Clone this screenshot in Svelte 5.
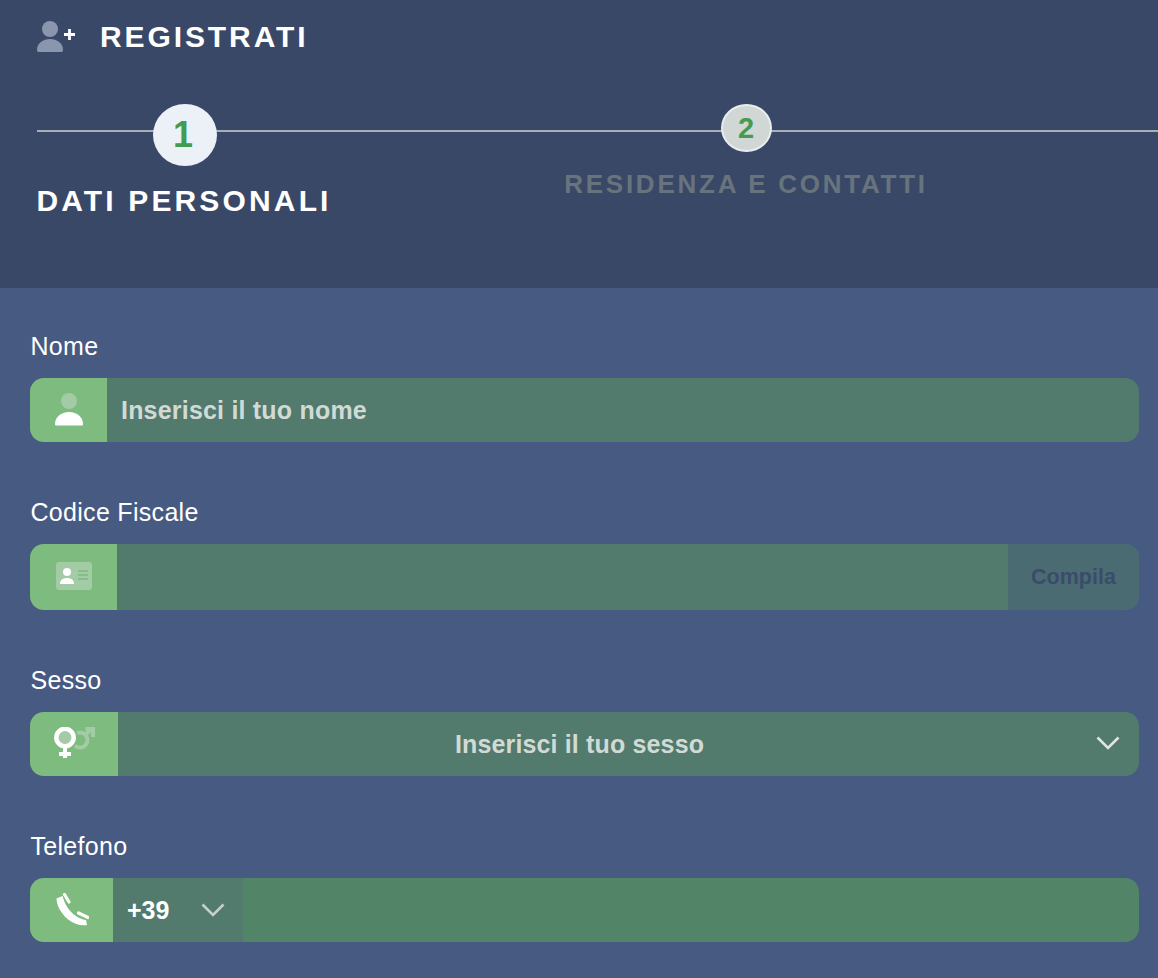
<script>
	let fields = [
		{ label: 'Nome', icon: 'user', placeholder: 'Inserisci il tuo nome' }
	]
</script>

<main>
	<header class="top">
		<div class="title">
			<svg class="title-icon" width="40" height="32" viewBox="0 0 40 32">
				<circle cx="13" cy="8" r="8" fill="#8a96ae" />
				<path d="M0 29 C0 22 6 18 13 18 C20 18 26 22 26 29 C26 30.500 25 31 24 31 H2 C1 31 0 30.500 0 29 Z" fill="#8a96ae" />
				<path d="M27 13.500 H38 M32.500 8 V19" stroke="#fff" stroke-width="2.800" fill="none" />
			</svg>
			<h1>REGISTRATI</h1>
		</div>
		<div class="stepper">
			<div class="line"></div>
			<div class="step active">
				<span class="circle">1</span>
				<span class="name">DATI PERSONALI</span>
			</div>
			<div class="step next">
				<span class="circle">2</span>
				<span class="name">RESIDENZA E CONTATTI</span>
			</div>
		</div>
	</header>

	<section class="form">
		{#each fields as f}
			<label class="lbl" for="nome">{f.label}</label>
			<div class="field first">
				<span class="addon a-nome">
					<svg width="30" height="34" viewBox="0 0 30 34">
						<circle cx="15" cy="8" r="8" fill="#a3cba6" />
						<path d="M1 31 C1 24 7 19 15 19 C23 19 29 24 29 31 C29 32 28.500 32.500 27.500 32.500 H2.500 C1.500 32.500 1 32 1 31 Z" fill="#fff" />
					</svg>
				</span>
				<input id="nome" placeholder={f.placeholder} />
			</div>
		{/each}

		<label class="lbl" for="cf">Codice Fiscale</label>
		<div class="field tall">
			<span class="addon a-cf">
				<svg width="36" height="28" viewBox="0 0 36 28">
					<rect width="36" height="28" rx="3" fill="#a3cba6" />
					<circle cx="11" cy="10" r="4" fill="#fff" />
					<path d="M4 22 C4 18 7 16 11 16 C15 16 18 18 18 22 Z" fill="#fff" />
					<path d="M22 9 H32 M22 13 H32 M22 17 H32" stroke="#7dbb7f" stroke-width="1.500" />
				</svg>
			</span>
			<input id="cf" />
			<button class="fill" type="button">Compila</button>
		</div>

		<label class="lbl" for="sesso">Sesso</label>
		<div class="field">
			<span class="addon a-sex">
				<svg width="42" height="34" viewBox="0 0 42 34">
					<circle cx="27" cy="13" r="7.500" fill="none" stroke="#a3cba6" stroke-width="4" />
					<path d="M32 8 L39 1.500 M32.500 2 H40 V10" fill="none" stroke="#a3cba6" stroke-width="4" />
					<circle cx="12" cy="10.500" r="13" fill="#7dbb7f" />
					<circle cx="12" cy="10.500" r="8.700" fill="#a3cba6" stroke="#fff" stroke-width="4.500" />
					<path d="M12 20 V31 M6 27 H18" stroke="#fff" stroke-width="4" fill="none" />
				</svg>
			</span>
			<div class="select" id="sesso">Inserisci il tuo sesso</div>
			<svg class="chev" width="24" height="14" viewBox="0 0 24 14"><path d="M1.500 1.500 L12 12 L22.500 1.500" fill="none" stroke="#dfe5e1" stroke-width="2.600" /></svg>
		</div>

		<label class="lbl" for="tel">Telefono</label>
		<div class="field tel">
			<span class="addon a-tel">
				<svg width="34" height="34" viewBox="0 0 34 34">
					<path d="M1.500 5.500 L7.500 3 C9.500 10.500 14 18.500 21 23 C24 25 27 26.500 31 27 L32 32 C20 34 8 25 3 13 C2 10 1.500 7.500 1.500 5.500 Z" fill="#fff" />
					<path d="M9.500 1.500 L14 9 M23.500 20 L33 24.500" stroke="#fff" stroke-width="3.200" fill="none" stroke-linecap="round" />
				</svg>
			</span>
			<div class="prefix">
				<span>+39</span>
				<svg width="24" height="14" viewBox="0 0 24 14"><path d="M1.500 1.500 L12 12 L22.500 1.500" fill="none" stroke="#c6d0ca" stroke-width="2.600" /></svg>
			</div>
			<input id="tel" />
		</div>
	</section>
</main>

<style>
	:global(body) {
		margin: 0;
		background: #475a82;
		font-family: "Liberation Sans", Arial, sans-serif;
	}
	main {
		width: 1158px;
		height: 978px;
		overflow: hidden;
		background: #475a82;
	}
	.top {
		height: 288px;
		box-sizing: border-box;
		background: #3a4868;
		padding: 20px 0 0 37px;
		overflow: hidden;
	}
	.title {
		display: flex;
		align-items: center;
		gap: 23px;
		height: 34px;
	}
	.title-icon {
		display: block;
	}
	h1 {
		margin: 0;
		color: #fff;
		font-size: 30px;
		font-weight: 700;
		letter-spacing: 2.900px;
		line-height: 34px;
	}
	.stepper {
		position: relative;
		display: flex;
		margin-top: 45px;
		height: 120px;
	}
	.line {
		position: absolute;
		left: 0;
		right: 0;
		top: 31px;
		height: 2px;
		background: #a9aebb;
	}
	.step {
		position: relative;
		display: flex;
		flex-direction: column;
		align-items: center;
	}
	.circle {
		display: flex;
		align-items: center;
		justify-content: center;
		border-radius: 50%;
		box-sizing: border-box;
		color: #459b51;
		font-weight: 700;
	}
	.name {
		font-weight: 700;
		white-space: nowrap;
	}
	.active {
		width: 294px;
		padding-top: 5px;
	}
	.active .circle {
		width: 64px;
		height: 62px;
		margin-left: 2px;
		padding-right: 4px;
		background: #ecf1f8;
		font-size: 36px;
	}
	.active .name {
		margin-top: 18px;
		color: #fff;
		font-size: 30px;
		letter-spacing: 3.150px;
		line-height: 34px;
	}
	.next {
		margin-left: 234px;
		width: 362px;
		padding-top: 5px;
	}
	.next .circle {
		width: 51px;
		height: 48px;
		background: #d1d7d5;
		border: 2px solid #e9ecef;
		font-size: 29px;
	}
	.next .name {
		margin-top: 16px;
		color: #67747d;
		font-size: 26px;
		letter-spacing: 2.750px;
		line-height: 32px;
	}
	.form {
		display: flex;
		flex-direction: column;
		padding: 44px 19px 0 30px;
	}
	.lbl {
		display: block;
		height: 46px;
		line-height: 29px;
		color: #fff;
		font-size: 25px;
		letter-spacing: 0.3px;
		padding-left: 0.5px;
	}
	.field {
		display: flex;
		align-items: stretch;
		height: 64px;
		margin-bottom: 56px;
		border-radius: 14px;
		overflow: hidden;
		background: #527b6d;
	}
	.tall {
		height: 66px;
		margin-bottom: 56px;
	}
	.tel {
		background: #528568;
		margin-bottom: 0;
	}
	.addon {
		display: flex;
		align-items: center;
		justify-content: center;
		flex: none;
		background: #7dbb7f;
	}
	.a-nome { width: 77px; }
	.a-cf { width: 87px; padding-bottom: 2px; box-sizing: border-box; }
	.a-sex { width: 88px; }
	.a-tel { width: 83px; }
	input {
		flex: 1;
		min-width: 0;
		border: 0;
		outline: 0;
		background: transparent;
		padding: 0 14px;
		font-family: inherit;
		font-size: 25px;
		font-weight: 700;
		letter-spacing: 0.2px;
		color: #fff;
	}
	input::placeholder {
		color: #d2dad6;
		opacity: 1;
	}
	.fill {
		width: 131px;
		flex: none;
		border: 0;
		background: #4b6b73;
		color: #3a4c69;
		font-family: inherit;
		font-size: 21.500px;
		font-weight: 700;
	}
	.field:not(.tel) {
		position: relative;
	}
	.select {
		flex: 1;
		display: flex;
		align-items: center;
		justify-content: center;
		padding-right: 98px;
		color: #d2dad6;
		font-size: 25px;
		font-weight: 700;
		letter-spacing: 0.15px;
	}
	.chev {
		position: absolute;
		right: 19px;
		top: 24px;
	}
	.prefix {
		display: flex;
		align-items: center;
		justify-content: space-between;
		width: 130px;
		flex: none;
		box-sizing: border-box;
		padding: 0 18px 0 14px;
		background: #527b6d;
		color: #fff;
		font-size: 25px;
		font-weight: 700;
	}
</style>
